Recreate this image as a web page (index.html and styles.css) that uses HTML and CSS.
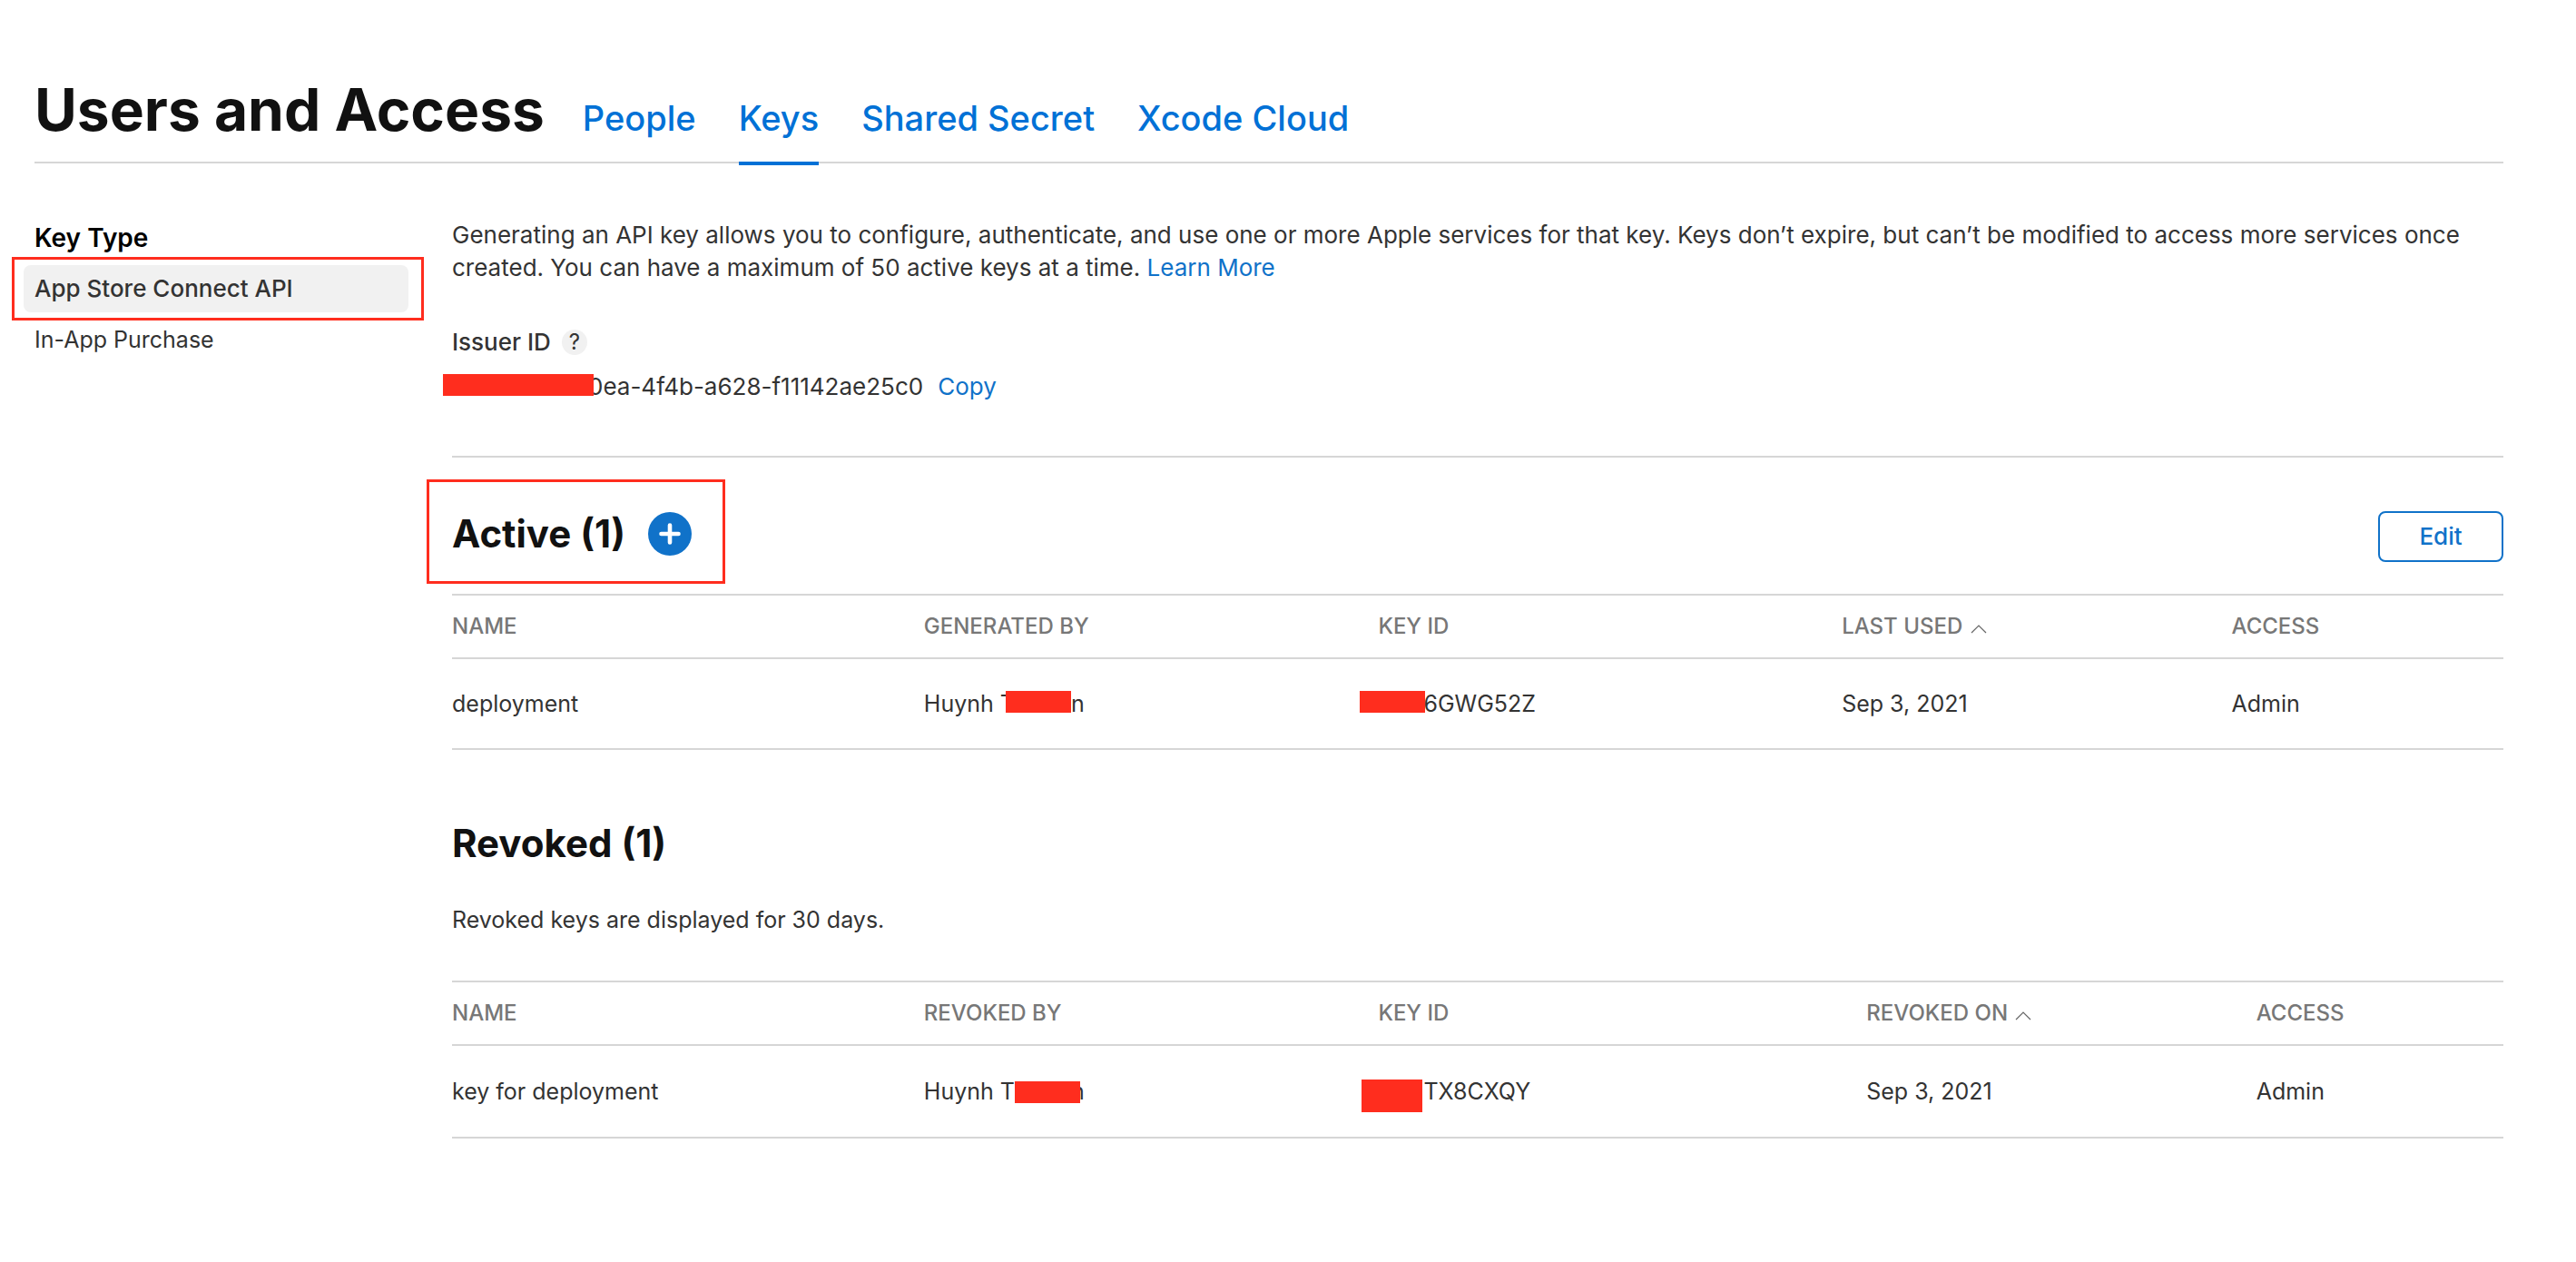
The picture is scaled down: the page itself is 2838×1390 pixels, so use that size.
FILE: index.html
```html
<!DOCTYPE html>
<html lang="en">
<head>
<meta charset="utf-8">
<meta name="viewport" content="width=device-width, initial-scale=1">
<title>Users and Access</title>
<link rel="stylesheet" href="styles.css">
</head>
<body>
<header class="page-header">
  <h1 class="page-title">Users and Access</h1>
  <nav class="tabs" aria-label="Sections">
    <a class="tab" href="#people">People</a>
    <a class="tab tab-current" href="#keys" aria-current="page">Keys</a>
    <a class="tab" href="#shared-secret">Shared Secret</a>
    <a class="tab" href="#xcode-cloud">Xcode Cloud</a>
  </nav>
</header>

<div class="layout">
  <aside class="sidebar">
    <h2 class="sidebar-title">Key Type</h2>
    <nav class="sidebar-nav" aria-label="Key Type">
      <a class="sidebar-link sidebar-link-current" href="#api" aria-current="true">App Store Connect API<span class="callout callout-link"></span></a>
      <a class="sidebar-link" href="#iap">In-App Purchase</a>
    </nav>
  </aside>

  <main class="content">
    <section class="intro">
      <p class="intro-text">Generating an API key allows you to configure, authenticate, and use one or more Apple services for that key. Keys don’t expire, but can’t be modified to access more services once created. You can have a maximum of 50 active keys at a time. <a class="link" href="#learn">Learn More</a></p>
      <div class="issuer-label">Issuer ID <button class="help" type="button" aria-label="Help">?</button></div>
      <div class="issuer-row">
        <span class="redacted"><span class="gap gap-issuer"></span>0ea-4f4b-a628-f11142ae25c0<span class="mask mask-issuer"></span></span>
        <button class="link" type="button">Copy</button>
      </div>
    </section>

    <section>
      <div class="section-head">
        <div class="section-group">
          <h2 class="section-title">Active (1)</h2>
          <button class="add" type="button" aria-label="Generate API key">
            <svg class="add-icon" viewBox="0 0 48 48" aria-hidden="true"><circle cx="24" cy="24" r="24" fill="#1072c9"/><path d="M24 14.500v19M14.500 24h19" stroke="#fff" stroke-width="4.600" stroke-linecap="round"/></svg>
          </button>
          <span class="callout callout-active"></span>
        </div>
        <button class="edit" type="button">Edit</button>
      </div>
      <table class="keys">
        <colgroup><col class="col-name"><col class="col-by"><col class="col-key"><col class="col-date"><col></colgroup>
        <thead>
          <tr><th>NAME</th><th>GENERATED BY</th><th>KEY ID</th><th>LAST USED <svg class="sort" viewBox="0 0 18 10" aria-hidden="true"><path d="M1 9 9 1l8 8" fill="none" stroke="#666" stroke-width="1.200"/></svg></th><th>ACCESS</th></tr>
        </thead>
        <tbody>
          <tr>
            <td>deployment</td>
            <td><span class="redacted">Huynh T<span class="gap gap-name"></span>n<span class="mask mask-name"></span></span></td>
            <td><span class="redacted"><span class="gap gap-key"></span>6GWG52Z<span class="mask mask-key"></span></span></td>
            <td>Sep 3, 2021</td>
            <td>Admin</td>
          </tr>
        </tbody>
      </table>
    </section>

    <section class="revoked">
      <h2 class="section-title">Revoked (1)</h2>
      <p class="revoked-note">Revoked keys are displayed for 30 days.</p>
      <table class="keys keys-revoked">
        <colgroup><col class="col-name"><col class="col-by"><col class="col-key"><col class="col-date"><col></colgroup>
        <thead>
          <tr><th>NAME</th><th>REVOKED BY</th><th>KEY ID</th><th>REVOKED ON <svg class="sort" viewBox="0 0 18 10" aria-hidden="true"><path d="M1 9 9 1l8 8" fill="none" stroke="#666" stroke-width="1.200"/></svg></th><th>ACCESS</th></tr>
        </thead>
        <tbody>
          <tr>
            <td>key for deployment</td>
            <td><span class="redacted">Huynh T<span class="gap gap-name"></span>n<span class="mask mask-name"></span></span></td>
            <td><span class="redacted"><span class="gap gap-key"></span>TX8CXQY<span class="mask mask-key"></span></span></td>
            <td>Sep 3, 2021</td>
            <td>Admin</td>
          </tr>
        </tbody>
      </table>
    </section>
  </main>
</div>
</body>
</html>
```
FILE: styles.css
```css
* { box-sizing: border-box; }

body {
  margin: 0;
  padding: 83px 80px 80px 38px;
  background: #fff;
  color: #333;
  font: 400 25px/36px Inter, "Liberation Sans", sans-serif;
}

h1, h2, p { margin: 0; }
a { text-decoration: none; }
button {
  padding: 0;
  border: 0;
  background: none;
  color: inherit;
  font: inherit;
  cursor: pointer;
}

/* Header and tabs */
.page-header {
  display: flex;
  align-items: baseline;
  gap: 42px;
  border-bottom: 2px solid #d6d6d6;
}
.page-title {
  color: #111;
  font-size: 64px;
  font-weight: 700;
  line-height: 76px;
}
.tabs { display: flex; gap: 47px; }
.tab {
  margin-bottom: -4px;
  padding-bottom: 25px;
  border-bottom: 4px solid transparent;
  color: #0071d6;
  font-size: 38px;
  font-weight: 500;
  line-height: 46px;
}
.tab-current { border-bottom-color: #0071d6; }

/* Two-column layout */
.layout { display: grid; grid-template-columns: 460px 1fr; }
.content { min-width: 0; padding-top: 61px; }

/* Sidebar */
.sidebar { padding: 64px 48px 0 0; }
.sidebar-title {
  color: #000;
  font-size: 28px;
  font-weight: 600;
  line-height: 36px;
}
.sidebar-nav {
  display: flex;
  flex-direction: column;
  gap: 4px;
  margin: 12px 0 0 -12px;
}
.sidebar-link {
  position: relative;
  padding-left: 12px;
  border-radius: 8px;
  color: #333;
  line-height: 52px;
}
.sidebar-link-current {
  background: #f1f1f1;
  font-size: 26px;
  font-weight: 500;
}

/* Red callout frames and redaction bars */
.callout {
  position: absolute;
  border: 3px solid #ff2d1e;
  pointer-events: none;
}
.callout-link { inset: -9px -17px -9px -13px; }
.callout-active { inset: -35px -37px -30px -28px; }
.redacted { position: relative; display: inline-block; }
.gap { display: inline-block; }
.gap-issuer { width: 150px; }
.gap-name { width: 62px; }
.gap-key { width: 50px; }
.mask {
  position: absolute;
  top: 4px;
  height: 24px;
  background: #ff2d1e;
}
.mask-issuer { left: -10px; width: 166px; }
.mask-name { left: 90px; width: 72px; }
.mask-key { left: -20px; width: 72px; }
.keys-revoked .mask-name { top: 7px; left: 100px; }
.keys-revoked .mask-key { top: 5px; left: -18px; width: 67px; height: 36px; }

/* Intro */
.intro {
  padding-bottom: 58px;
  border-bottom: 2px solid #d6d6d6;
  font-size: 26px;
}
.intro-text { padding-right: 40px; }
.link { color: #1072c9; }
.issuer-label {
  display: flex;
  align-items: center;
  gap: 12px;
  margin-top: 48px;
  font-weight: 500;
  line-height: 32px;
}
.help {
  width: 28px;
  height: 28px;
  border-radius: 50%;
  background: #f1f1f1;
  font-size: 24px;
  font-weight: 400;
  line-height: 28px;
}
.issuer-row { display: flex; gap: 16px; margin-top: 15px; }

/* Sections */
.section-head {
  display: flex;
  align-items: flex-start;
  justify-content: space-between;
  padding: 59px 0 35px;
}
.section-group {
  position: relative;
  display: flex;
  align-items: center;
  gap: 25px;
}
.section-title {
  color: #111;
  font-size: 42px;
  font-weight: 700;
  line-height: 50px;
}
.add, .add-icon { display: block; width: 48px; height: 48px; }
.edit {
  width: 138px;
  height: 56px;
  border: 2px solid #1072c9;
  border-radius: 8px;
  color: #1072c9;
  font-size: 26px;
  font-weight: 500;
}
.revoked { margin-top: 78px; }
.revoked-note { margin: 41px 0 49px; }

/* Tables */
.keys {
  width: 100%;
  table-layout: fixed;
  border-collapse: separate;
  border-spacing: 0;
}
.keys th, .keys td {
  padding: 0;
  border-bottom: 2px solid #d6d6d6;
  text-align: left;
}
.keys th {
  height: 72px;
  border-top: 2px solid #d6d6d6;
  color: #777;
  font-size: 24px;
  font-weight: 500;
  line-height: 28px;
}
.keys td { height: 100px; }
.keys-revoked td { height: 102px; }
.col-name { width: 23%; }
.col-by { width: 22.15%; }
.col-key { width: 22.6%; }
.col-date { width: 19%; }
.keys-revoked .col-key { width: 23.8%; }
.sort { width: 18px; height: 10px; margin-left: 2px; }
```
